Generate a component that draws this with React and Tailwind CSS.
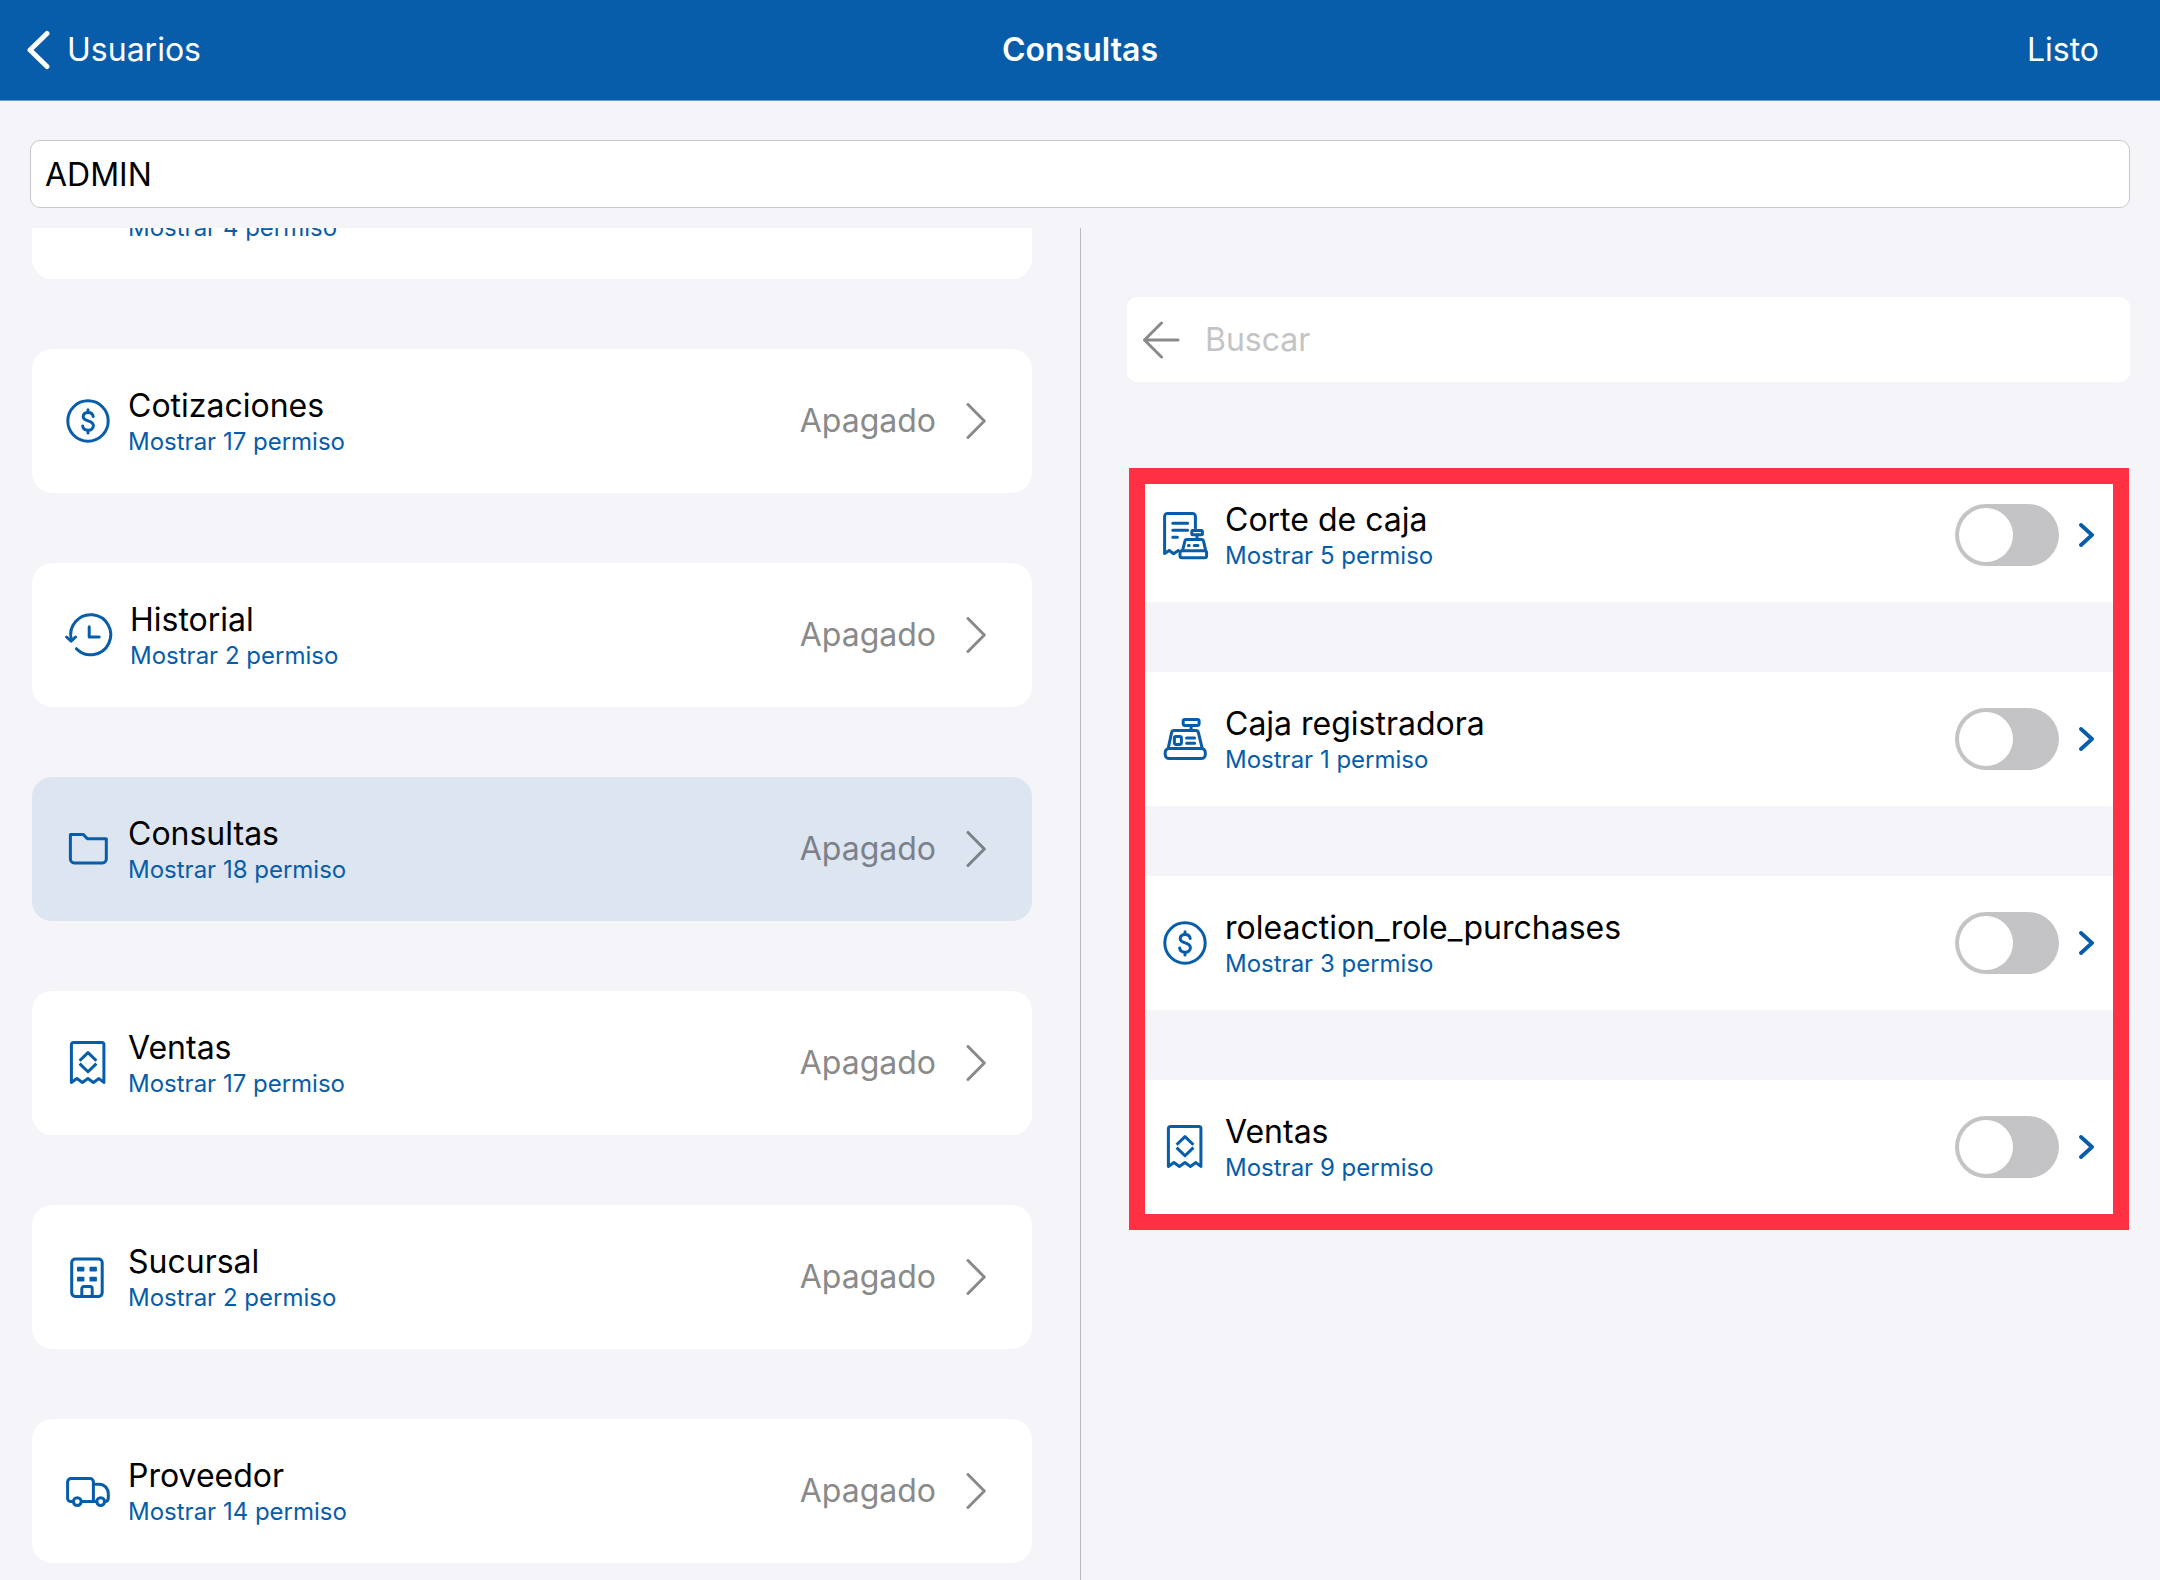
import React, { useState } from 'react';

const strokeProps = {
  fill: 'none',
  stroke: 'currentColor',
  strokeWidth: 3,
  strokeLinecap: 'round',
  strokeLinejoin: 'round',
};

function Icon({ children, wide = false }) {
  return (
    <svg
      viewBox={wide ? '0 0 46 48' : '0 0 44 48'}
      className={`${wide ? 'w-[46px]' : 'w-11'} h-12 flex-shrink-0 overflow-visible text-[#075da9]`}
      aria-hidden="true"
      {...strokeProps}
    >
      {children}
    </svg>
  );
}

const DollarIcon = () => (
  <Icon>
    <circle cx="22" cy="24" r="20.2" />
    <path d="M27.2 19.4c-.4-2.5-2.4-4-5.1-4-2.8 0-4.9 1.6-4.9 4.1 0 2.7 2.2 3.6 4.9 4.4 2.8.8 5.3 1.9 5.3 4.9 0 2.7-2.3 4.4-5.3 4.4s-5.1-1.6-5.4-4.1M22 12.8v2.6M22 33.2v2.8" />
  </Icon>
);

const HistoryIcon = () => (
  <Icon wide>
    <path d="M5.3 28.5A20 20 0 1 1 10.4 37.7" />
    <path d="M.6 26 5.1 30.2 9.6 26M23.2 15.8V26h10" />
  </Icon>
);

const FolderIcon = () => (
  <Icon>
    <path d="M4.4 9.4h12.8l4.2 4.3h18.9v20.4a3.8 3.8 0 0 1-3.8 3.8H8.2a3.8 3.8 0 0 1-3.8-3.8z" />
  </Icon>
);

const ReceiptIcon = () => (
  <Icon>
    <path d="M5.4 43.4V5.5a2 2 0 0 1 2-2h28.5a2 2 0 0 1 2 2v37.9l-5-3.8-5.5 3.8-5.5-3.8-5.5 3.8-5.5-3.8z" />
    <path d="M13.6 21.8 22 13.6l8.4 8.2M13.6 24.6 22 32.8l8.4-8.2" strokeLinecap="butt" />
  </Icon>
);

const BuildingIcon = () => (
  <Icon>
    <rect x="5.7" y="6" width="30.5" height="37.4" rx="3.6" />
    <path d="M15.8 43.2v-7.6a2 2 0 0 1 2-2h6.4a2 2 0 0 1 2 2v7.6" />
    <g fill="currentColor" stroke="none">
      <rect x="11" y="13.8" width="7.4" height="4.8" rx=".8" />
      <rect x="23.5" y="13.8" width="7.4" height="4.8" rx=".8" />
      <rect x="11" y="23.8" width="7.4" height="4.8" rx=".8" />
      <rect x="23.5" y="23.8" width="7.4" height="4.8" rx=".8" />
    </g>
  </Icon>
);

const TruckIcon = () => (
  <Icon>
    <path d="M7.2 34.6H5a3.4 3.4 0 0 1-3.4-3.4V15a3.4 3.4 0 0 1 3.4-3.4h19a3.4 3.4 0 0 1 3.4 3.4v19.6H15.4" />
    <path d="M27.4 17.2h5.4c6 0 9.5 4.6 9.5 9.6V31c0 2-1 3.6-3.4 3.6M27.4 34.6h3.2" />
    <circle cx="11.3" cy="34.6" r="3.9" />
    <circle cx="34.7" cy="34.6" r="3.9" />
  </Icon>
);

const RegisterIcon = () => (
  <Icon>
    <rect x="20.2" y="4.4" width="15.9" height="6" rx="1.6" />
    <path d="M28.1 10.6v5M5.2 33.4 8.6 17.6a2.6 2.6 0 0 1 2.5-2h21.8a2.6 2.6 0 0 1 2.5 2l3.8 15.8" />
    <rect x="2.2" y="33.4" width="40.1" height="10.2" rx="4" />
    <rect x="11.4" y="21.4" width="7" height="8" rx="1.6" />
    <path d="M23.6 23h8M23.6 28.2h8" />
  </Icon>
);

const CashCutIcon = () => (
  <Icon>
    <path d="M32.4 17V5.4a2.8 2.8 0 0 0-2.8-2.8H4.4a2.8 2.8 0 0 0-2.8 2.8v37l4.6-3 4.4 3.4 4.8-3.2" />
    <path d="M9.8 12.3h14.8M9.8 19.3h14.8M9.8 26.3h4.6" />
    <rect x="28.8" y="19.6" width="10.6" height="4.2" rx="1" />
    <path d="M34 24v4M19.6 39.6l2.3-9.6a2 2 0 0 1 2-1.6h14.6a2 2 0 0 1 2 1.6l2.2 9.6M25.4 34.4h.8M31.2 34.4h3.8" />
    <rect x="17" y="39.8" width="26.6" height="7" rx="2" />
  </Icon>
);

const modules = [
  { id: 'previous', title: '', count: 4 },
  { id: 'quotes', title: 'Cotizaciones', count: 17, icon: DollarIcon },
  { id: 'history', title: 'Historial', count: 2, icon: HistoryIcon },
  { id: 'queries', title: 'Consultas', count: 18, icon: FolderIcon },
  { id: 'sales', title: 'Ventas', count: 17, icon: ReceiptIcon },
  { id: 'branch', title: 'Sucursal', count: 2, icon: BuildingIcon },
  { id: 'supplier', title: 'Proveedor', count: 14, icon: TruckIcon },
];

const permissions = [
  { id: 'cash-cut', title: 'Corte de caja', count: 5, icon: CashCutIcon },
  { id: 'register', title: 'Caja registradora', count: 1, icon: RegisterIcon },
  { id: 'purchases', title: 'roleaction_role_purchases', count: 3, icon: DollarIcon },
  { id: 'sales', title: 'Ventas', count: 9, icon: ReceiptIcon },
];

function ItemText({ id, title, count }) {
  return (
    <span className="flex min-w-0 flex-1 flex-col pt-0.5 text-left">
      <span id={id} className="h-10 truncate text-[32px] leading-10 text-black">{title}</span>
      <span className="text-2xl leading-8 text-[#075da9]">Mostrar {count} permiso</span>
    </span>
  );
}

function ModuleCard({ item, selected, onSelect }) {
  const ItemIcon = item.icon;
  return (
    <button
      type="button"
      onClick={onSelect}
      className={`flex h-36 w-full flex-shrink-0 items-center gap-[18px] rounded-[20px] pl-[34px] pr-[46px] ${
        selected ? 'bg-[#dde5f0] text-[#7b818a]' : 'bg-white text-[#8a8a8a]'
      }`}
    >
      {ItemIcon ? <ItemIcon /> : <span className="w-11 flex-shrink-0" />}
      <ItemText title={item.title} count={item.count} />
      <span className="text-[32px] leading-10">Apagado</span>
      <svg viewBox="0 0 20 36" className="ml-3 h-9 w-5" aria-hidden="true" {...strokeProps}>
        <path d="M2 1.5 18.3 18 2 34.5" />
      </svg>
    </button>
  );
}

function PermissionRow({ item, enabled, onToggle }) {
  const ItemIcon = item.icon;
  const labelId = `permission-${item.id}`;
  return (
    <li className="flex h-[134px] items-center gap-[18px] bg-white pl-[34px] pr-[35px]">
      <ItemIcon />
      <ItemText id={labelId} title={item.title} count={item.count} />
      <input
        type="checkbox"
        role="switch"
        aria-labelledby={labelId}
        checked={enabled}
        onChange={onToggle}
        className="h-[62px] w-[104px] flex-shrink-0 appearance-none rounded-full bg-[#c4c4c6] p-1 before:block before:size-[54px] before:rounded-full before:bg-white checked:bg-[#075da9] checked:before:ml-auto"
      />
      <button type="button" aria-label={`Abrir ${item.title}`} className="ml-0.5 text-[#075da9]">
        <svg viewBox="0 0 15 24" className="h-6 w-[15px]" {...strokeProps} strokeWidth="3.8">
          <path d="M2 2l11 10L2 22" />
        </svg>
      </button>
    </li>
  );
}

export default function App() {
  const [roleName, setRoleName] = useState('ADMIN');
  const [search, setSearch] = useState('');
  const [selected, setSelected] = useState('queries');
  const [enabled, setEnabled] = useState({});

  return (
    <div className="flex h-screen flex-col overflow-hidden bg-[#f4f4f9] font-['Inter','Liberation_Sans',sans-serif] text-[32px] leading-10">
      <header className="grid h-[101px] flex-shrink-0 grid-cols-[1fr_auto_1fr] items-center border-b border-[#6c9cc9] bg-[#075da9] pl-[27px] pr-[61px] text-white">
        <button type="button" className="flex items-center gap-4 justify-self-start">
          <svg viewBox="0 0 24 40" className="h-10 w-6" aria-hidden="true" {...strokeProps} strokeWidth="5">
            <path d="M20 3.5 3 20l17 16.5" />
          </svg>
          Usuarios
        </button>
        <h1 className="pl-[34px] font-semibold">Consultas</h1>
        <button type="button" className="justify-self-end">Listo</button>
      </header>

      <div className="flex-shrink-0 px-[30px] pb-5 pt-[39px]">
        <input
          type="text"
          aria-label="Nombre del rol"
          value={roleName}
          onChange={(e) => setRoleName(e.target.value)}
          className="block h-[68px] w-full rounded-[10px] border border-[#c8c8cc] bg-white px-3.5 text-black outline-none"
        />
      </div>

      <main className="grid min-h-0 flex-1 grid-cols-2">
        <section className="overflow-hidden pl-8 pr-12">
          {/* list is scrolled past its first item */}
          <div className="-mt-[93px] flex flex-col gap-[70px]">
            {modules.map((item) => (
              <ModuleCard
                key={item.id}
                item={item}
                selected={item.id === selected}
                onSelect={() => setSelected(item.id)}
              />
            ))}
          </div>
        </section>

        <section className="border-l border-[#b9b9be] pl-[46px] pr-[30px] pt-[69px]">
          <div className="flex h-[85px] items-center gap-[25px] rounded-[10px] bg-white px-[15px]">
            <button type="button" aria-label="Volver" className="text-[#8a8a8a]">
              <svg viewBox="0 0 38 38" className="size-[38px]" {...strokeProps}>
                <path d="M36 19H2.5M19.5 2 2.5 19l17 17" />
              </svg>
            </button>
            <input
              type="text"
              aria-label="Buscar"
              placeholder="Buscar"
              value={search}
              onChange={(e) => setSearch(e.target.value)}
              className="min-w-0 flex-1 bg-transparent text-black outline-none placeholder:text-[#c4c4c6]"
            />
          </div>

          <div className="relative ml-0.5 mr-px mt-[86px]">
            <ul className="flex flex-col gap-[70px]">
              {permissions.map((item) => (
                <PermissionRow
                  key={item.id}
                  item={item}
                  enabled={!!enabled[item.id]}
                  onToggle={() => setEnabled({ ...enabled, [item.id]: !enabled[item.id] })}
                />
              ))}
            </ul>
            <div className="pointer-events-none absolute inset-x-0 -bottom-4 top-0 border-[16px] border-[#ff3142]" />
          </div>
        </section>
      </main>
    </div>
  );
}
